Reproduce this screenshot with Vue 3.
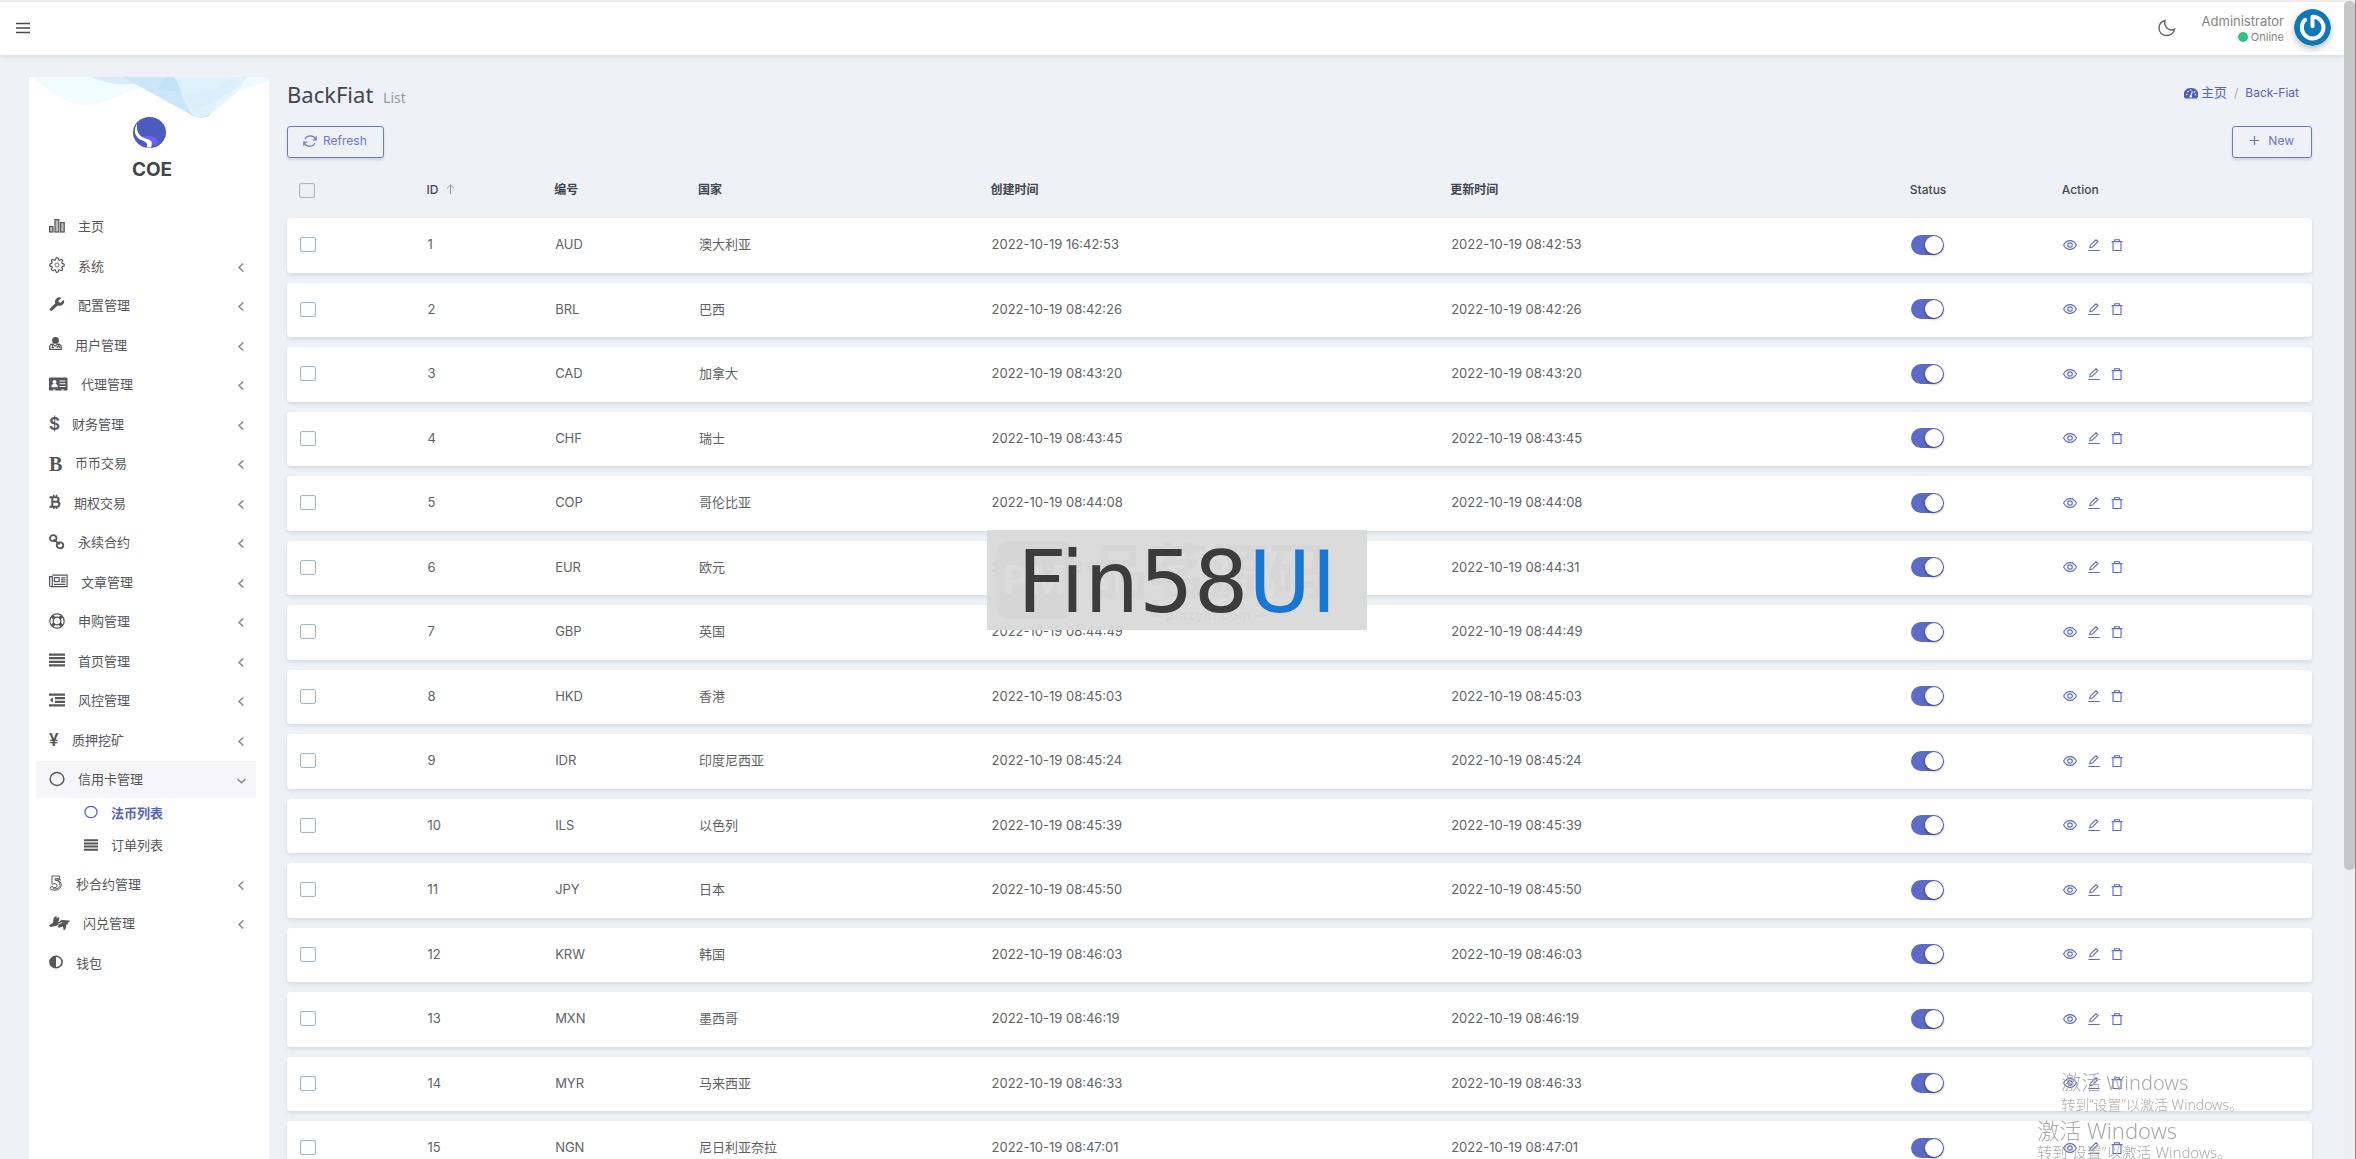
<script setup>
import { reactive, ref } from "vue";

const gear =
  '<g transform="scale(.6667)"><circle cx="12" cy="12" r="3"/><path d="M19.4 15a1.65 1.65 0 0 0 .33 1.82l.06.06a2 2 0 0 1 0 2.83 2 2 0 0 1-2.83 0l-.06-.06a1.65 1.65 0 0 0-1.82-.33 1.65 1.65 0 0 0-1 1.51V21a2 2 0 0 1-2 2 2 2 0 0 1-2-2v-.09A1.65 1.65 0 0 0 9 19.4a1.65 1.65 0 0 0-1.82.33l-.06.06a2 2 0 0 1-2.83 0 2 2 0 0 1 0-2.83l.06-.06a1.65 1.65 0 0 0 .33-1.82 1.65 1.65 0 0 0-1.51-1H3a2 2 0 0 1-2-2 2 2 0 0 1 2-2h.09A1.65 1.65 0 0 0 4.6 9a1.65 1.65 0 0 0-.33-1.82l-.06-.06a2 2 0 0 1 0-2.83 2 2 0 0 1 2.83 0l.06.06a1.65 1.65 0 0 0 1.82.33H9a1.65 1.65 0 0 0 1-1.51V3a2 2 0 0 1 2-2 2 2 0 0 1 2 2v.09a1.65 1.65 0 0 0 1 1.51 1.65 1.65 0 0 0 1.82-.33l.06-.06a2 2 0 0 1 2.83 0 2 2 0 0 1 0 2.83l-.06.06a1.65 1.65 0 0 0-.33 1.82V9a1.65 1.65 0 0 0 1.51 1H21a2 2 0 0 1 2 2 2 2 0 0 1-2 2h-.09a1.65 1.65 0 0 0-1.51 1z" stroke-width="1.8"/></g>';

// w = drawn width, every icon is 16 high
const icons = {
  chart: {
    w: 16,
    body: '<g fill="#bbb"><rect x=".6" y="8.6" width="3.4" height="5.4"/><rect x="6" y="1.6" width="3.8" height="12.4"/><rect x="11.6" y="4.6" width="3.6" height="9.4"/></g>',
  },
  gear: { w: 16, body: gear },
  wrench: {
    w: 16,
    body: '<path transform="translate(-1.6 -1) scale(.76 .7)" fill="currentColor" stroke="none" d="M14.7 6.3a1 1 0 0 0 0 1.4l1.6 1.6a1 1 0 0 0 1.4 0l3.77-3.77a6 6 0 0 1-7.94 7.94l-6.91 6.91a2.12 2.12 0 0 1-3-3l6.91-6.91a6 6 0 0 1 7.94-7.94l-3.76 3.76z"/>',
  },
  doctor: {
    w: 13,
    body: '<circle cx="6.5" cy="4.4" r="3.4" fill="currentColor" stroke="none"/><path d="M.7 13.4V11c0-1.9 1-2.9 3-2.9l2.5 2 2.6-2c2.2 0 3.5 1 3.5 2.9v2.4z"/><path d="M3.5 8.5v3M9.5 8.5v2M8.3 12v-1.2c0-1 2.5-1 2.5 0V12M2.5 11.5H5"/>',
  },
  card: {
    w: 19,
    body: '<rect x="0" y="1.5" width="18.5" height="13" rx="1.2" fill="currentColor" stroke="none"/><g fill="#fff" stroke="none"><circle cx="5.5" cy="6" r="2"/><path d="M2.3 11.3c0-3 1.2-3.4 3.2-3.4s3.3.4 3.3 3.4z"/><path d="M10.5 4.5h6v1.1h-6zM10.5 7.2h6v1.1h-6zM10.5 9.9h6V11h-6zM4 13.6h2.5v.9H4zM12.5 13.6H15v.9h-2.5z"/></g>',
  },
  dollar: { w: 10, glyph: "$" },
  bold: { w: 13, glyph: "B", serif: true },
  bitcoin: {
    w: 12,
    body: '<path stroke-width="2" d="M3.3 3.2h3.8c3.3 0 3.3 4.5 0 4.5H3.3zM3.3 7.7h4.5c3.4 0 3.4 5.1 0 5.1H3.3zM.5 3.2h3M.5 12.8h3"/><path stroke-width="1.5" d="M4.8.8v2M7.5.8v2M4.8 13v2M7.5 13v2"/>',
  },
  link: {
    w: 16,
    body: '<g stroke-width="1.8"><ellipse cx="4.2" cy="4.2" rx="3.3" ry="3"/><ellipse cx="11" cy="11.3" rx="3.3" ry="3"/><path d="M4.6 5.4l6 5"/></g>',
  },
  news: {
    w: 19,
    body: '<path d="M3.3 2.1h14.8v11.6H2.2C1.2 13.7.6 13 .6 12.2V3.6h2.7v8.6c0 1-.6 1.5-1.2 1.5"/><rect x="5.4" y="4.7" width="4.8" height="3.9"/><path d="M12 4.9h4.4M12 6.9h4.4M12 8.9h4.4M5 11.3h11.4"/>',
  },
  ring: {
    w: 16,
    body: '<circle cx="8" cy="8" r="7.2"/><circle cx="8" cy="8" r="3.8"/><g stroke-width="3.4"><path d="M3.1 3.1l2.5 2.5M12.9 3.1l-2.5 2.5M3.1 12.9l2.5-2.5M12.9 12.9l-2.5-2.5"/></g>',
  },
  justify: {
    w: 16,
    body: '<path stroke-width="2.2" d="M0 2.6h16M0 6.2h16M0 9.8h16M0 13.4h16"/>',
  },
  outdent: {
    w: 16,
    body: '<path stroke-width="2.2" d="M0 2.6h16M6 6.2h10M6 9.8h10M0 13.4h16"/><path d="M3.9 5.3v5.5L.8 8z" fill="currentColor" stroke="none"/>',
  },
  yen: { w: 10, glyph: "¥" },
  circle: { w: 16, body: '<ellipse cx="8" cy="8" rx="6.9" ry="6.5" stroke-width="1.4"/>' },
  five: {
    w: 14,
    body: '<path stroke-width="1" d="M3 1h7.5v2.7H6v1.5c8-1 8.5 9.8 0 10-2.3 0-4-.6-5-1.7l1.6-2.1c3.6 2.7 6.2.7 5.2-1.6-.8-1.5-2.7-1.400-4.3-.6H3zM8 3.7l4 1.5M7 5.2c3 1 4 2 3.8 5M4 13.5c4 1 6.5-.5 7-3"/>',
  },
  sign: {
    w: 21,
    body: '<path fill="currentColor" stroke="none" d="M0 10.5L4 7.5 4.6 3 7.200.8l.8 2.800L9.600 2l.9 1.200-1.300 4.200 3.300-2.500 8.100.5-.2 1.700-1.800.6.5 1.600-1.700.3-.8 4.300-1.800 1.500-1-3.800-3.800 1.200-1.700-1.300 2.500-2.300L6.500 11l-5 .9z"/><path stroke="#fff" stroke-width=".8" d="M9.200 9l4.200-1.500"/>',
  },
  half: {
    w: 14,
    body: '<ellipse cx="7" cy="8" rx="6.1" ry="5.7" stroke-width="1.6"/><path d="M7 2.5A5.7 5.5 0 0 0 7 13.5z" fill="currentColor" stroke="none"/>',
  },
};

const menus = reactive([
  { icon: "chart", title: "主页" },
  { icon: "gear", title: "系统", arrow: true },
  { icon: "wrench", title: "配置管理", arrow: true },
  { icon: "doctor", title: "用户管理", arrow: true },
  { icon: "card", title: "代理管理", arrow: true },
  { icon: "dollar", title: "财务管理", arrow: true },
  { icon: "bold", title: "币币交易", arrow: true },
  { icon: "bitcoin", title: "期权交易", arrow: true },
  { icon: "link", title: "永续合约", arrow: true },
  { icon: "news", title: "文章管理", arrow: true },
  { icon: "ring", title: "申购管理", arrow: true },
  { icon: "justify", title: "首页管理", arrow: true },
  { icon: "outdent", title: "风控管理", arrow: true },
  { icon: "yen", title: "质押挖矿", arrow: true },
  {
    icon: "circle",
    title: "信用卡管理",
    arrow: true,
    open: true,
    children: [
      { icon: "circle", title: "法币列表", active: true },
      { icon: "justify", title: "订单列表" },
    ],
  },
  { icon: "five", title: "秒合约管理", arrow: true },
  { icon: "sign", title: "闪兑管理", arrow: true },
  { icon: "half", title: "钱包" },
]);

const checkAll = ref(false);
const rows = reactive(
  [
    ["AUD", "澳大利亚", "16:42:53", "08:42:53"],
    ["BRL", "巴西", "08:42:26"],
    ["CAD", "加拿大", "08:43:20"],
    ["CHF", "瑞士", "08:43:45"],
    ["COP", "哥伦比亚", "08:44:08"],
    ["EUR", "欧元", "08:44:31"],
    ["GBP", "英国", "08:44:49"],
    ["HKD", "香港", "08:45:03"],
    ["IDR", "印度尼西亚", "08:45:24"],
    ["ILS", "以色列", "08:45:39"],
    ["JPY", "日本", "08:45:50"],
    ["KRW", "韩国", "08:46:03"],
    ["MXN", "墨西哥", "08:46:19"],
    ["MYR", "马来西亚", "08:46:33"],
    ["NGN", "尼日利亚奈拉", "08:47:01"],
  ].map(([code, country, created, updated], i) => ({
    id: i + 1,
    code,
    country,
    created: "2022-10-19 " + created,
    updated: "2022-10-19 " + (updated || created),
    status: true,
    checked: false,
  }))
);

const toggleAll = () => {
  rows.forEach((row) => (row.checked = checkAll.value));
};
</script>

<template>
  <div class="shell">
    <div class="page">
      <header class="topbar">
        <button class="icon-btn" aria-label="Toggle menu">
          <svg width="14" height="12" viewBox="0 0 14 12"><path d="M0 1.5h14M0 6h14M0 10.5h14" stroke="#4a4a4d" stroke-width="1.7" /></svg>
        </button>
        <div class="topbar-right">
          <button class="icon-btn" aria-label="Dark mode">
            <svg width="18" height="18" viewBox="0 0 18 18" fill="none" stroke="#666" stroke-width="1.4">
              <path d="M7 1.5C3.5 2.5 1 5.500 1 9c0 4.4 3.4 7.5 7.7 7.5 4 0 7.3-2.5 7.9-6.3-1 .5-1.9.8-3 .8-4.3 0-8-4.5-6.6-9.5z" />
            </svg>
          </button>
          <div class="user">
            <span class="user-name">Administrator</span>
            <span class="user-state"><i class="dot"></i>Online</span>
          </div>
          <svg class="avatar" width="37" height="37" viewBox="0 0 37 37">
            <circle cx="18.5" cy="18.5" r="18.5" fill="#0f77b8" />
            <path d="M11.2 10.8a10.8 10.8 0 1 0 7.3-3v9.5" fill="none" stroke="#fff" stroke-width="4" stroke-linecap="round" stroke-linejoin="round" />
          </svg>
        </div>
      </header>

      <div class="body">
        <aside class="sidebar">
          <div class="brand">
            <svg class="wave" viewBox="0 0 240 42" preserveAspectRatio="none" aria-hidden="true">
              <path d="M2 0C28 18 38 30 60 28S100 12 115 10L96 0z" fill="#e9fafa" opacity=".6" />
              <path d="M24 0c14 12 34 28 54 22L120 6 96 0z" fill="#effbfc" opacity=".8" />
              <path d="M62 0c12 6 30 9 46 6L128 0z" fill="#d6ecfa" />
              <path d="M94 0c24 14 48 26 70 39 4 3 12 2 16 0L206 0z" fill="#cbe6f9" />
              <path d="M128 12c22 5 46 0 62-12h-52z" fill="#b4dbf6" opacity=".4" />
              <path d="M145 0c8 10 8 26 20 39 14 8 38-23 62-39z" fill="#e3f3fd" opacity=".85" />
              <path d="M155 18c24-2 36-6 50-18h22c-26 14-42 26-62 33z" fill="#d3ebfb" opacity=".5" />
              <path d="M208 14l32-10V0h-22z" fill="#eef9fd" />
            </svg>
            <svg class="logo" width="33" height="31" viewBox="0 0 33 31" aria-hidden="true">
              <ellipse cx="16.5" cy="15.5" rx="16.5" ry="15.5" fill="#4b5bbe" />
              <path d="M5 17c2 3 6 2 12 2 5 0 8 3 8 5s-2 4-4 5l-5-3c0-4-8-3-11-9z" fill="#6a62e8" />
              <path d="M4 6.500C0 14 2 19.500 7 22.500c5 2.500 8.500 2.500 6.500 8h4.500c2-5 .5-7.500-4-8.500C7 20 3 16 4 6.500z" fill="#fff" />
            </svg>
            <strong>COE</strong>
          </div>
          <nav>
            <ul class="menu">
              <li v-for="item in menus" :key="item.title">
                <a href="#" class="menu-link" :class="{ open: item.open }" @click.prevent="item.children && (item.open = !item.open)">
                  <span v-if="icons[item.icon].glyph" class="glyph" :class="{ serif: icons[item.icon].serif }" :style="{ width: icons[item.icon].w + 'px' }">{{ icons[item.icon].glyph }}</span>
                  <svg v-else class="menu-icon" :width="icons[item.icon].w" height="16" :viewBox="`0 0 ${icons[item.icon].w} 16`" v-html="icons[item.icon].body"></svg>
                  <span>{{ item.title }}</span>
                  <svg v-if="item.arrow && !item.open" class="arrow" width="9" height="9" viewBox="-1 0 9 9"><path d="M5.3.5L1 4.5l4.3 4" /></svg>
                  <svg v-else-if="item.arrow" class="arrow" width="9" height="6" viewBox="0 0 9 6"><path d="M.5 1l4 3.8L8.5 1" /></svg>
                </a>
                <ul v-if="item.open" class="submenu">
                  <li v-for="sub in item.children" :key="sub.title">
                    <a href="#" class="sub-link" :class="{ active: sub.active }">
                      <svg class="menu-icon" width="14" height="14" viewBox="0 0 16 16" v-html="icons[sub.icon].body"></svg>
                      <span>{{ sub.title }}</span>
                    </a>
                  </li>
                </ul>
              </li>
            </ul>
          </nav>
        </aside>

        <main class="content">
          <div class="title-row">
            <h1>BackFiat <small>List</small></h1>
            <div class="crumbs">
              <a href="#">
                <svg width="14" height="12" viewBox="0 0 14 12">
                  <path d="M7 1a7 6.5 0 0 0-5.9 10.5h11.8A7 6.5 0 0 0 7 1z" fill="#4b5bbe" />
                  <path d="M6.600 9.500L8.400 4.500" stroke="#fff" stroke-width="1.1" />
                  <g fill="#fff"><circle cx="2.7" cy="7.5" r=".8" /><circle cx="4" cy="4.6" r=".8" /><circle cx="6.7" cy="3" r=".8" /><circle cx="10.5" cy="4.9" r=".8" /><circle cx="11.5" cy="7.6" r=".8" /><circle cx="6.7" cy="9.5" r="1.2" /></g>
                </svg>
                主页
              </a>
              <span class="slash">/</span>
              <a href="#">Back-Fiat</a>
            </div>
          </div>

          <div class="tools">
            <button class="btn">
              <svg width="14" height="12" viewBox="0 0 14 12" fill="none" stroke="currentColor" stroke-width="1.2">
                <path d="M12.8 4.6C11.8 2.2 9.6.8 7.2.8 5 .8 3 2 2 4M1.2 7.4c1 2.4 3.2 3.8 5.6 3.8 2.2 0 4.2-1.2 5.200-3.200" />
                <path d="M13.2 1.2v3.6H9.8M.8 10.8V7.2h3.4" />
              </svg>
              Refresh
            </button>
            <button class="btn btn-new">
              <svg width="9" height="9" viewBox="0 0 9 9" stroke="currentColor" stroke-width="1.2"><path d="M4.5 0v9M0 4.5h9" /></svg>
              New
            </button>
          </div>

          <table>
            <colgroup>
              <col style="width: 6.3%" />
              <col style="width: 6.3%" />
              <col style="width: 7.1%" />
              <col style="width: 14.45%" />
              <col style="width: 22.7%" />
              <col style="width: 22.7%" />
              <col style="width: 7.5%" />
              <col />
            </colgroup>
            <thead>
              <tr>
                <th><input v-model="checkAll" type="checkbox" class="check" aria-label="Select all" @change="toggleAll" /></th>
                <th>
                  ID
                  <svg class="sort" width="9" height="10" viewBox="0 0 9 10"><path d="M4.5 10V1M.8 4.5L4.5.9l3.7 3.6" /></svg>
                </th>
                <th class="strong">编号</th>
                <th class="strong">国家</th>
                <th class="strong">创建时间</th>
                <th class="strong">更新时间</th>
                <th>Status</th>
                <th>Action</th>
              </tr>
            </thead>
            <tbody>
              <tr v-for="row in rows" :key="row.id">
                <td><input v-model="row.checked" type="checkbox" class="check" :aria-label="'Select ' + row.code" /></td>
                <td>{{ row.id }}</td>
                <td>{{ row.code }}</td>
                <td>{{ row.country }}</td>
                <td>{{ row.created }}</td>
                <td>{{ row.updated }}</td>
                <td><input v-model="row.status" type="checkbox" class="switch" :aria-label="'Status ' + row.code" /></td>
                <td>
                  <div class="actions">
                    <a href="#" aria-label="View">
                      <svg width="14" height="12" viewBox="0 0 14 12"><path d="M.6 6C2 3.2 4.3 1.6 7 1.6S12 3.2 13.4 6C12 8.8 9.7 10.4 7 10.4S2 8.8.6 6z" /><ellipse cx="7" cy="6" rx="2.3" ry="2.1" /></svg>
                    </a>
                    <a href="#" aria-label="Edit">
                      <svg width="12" height="12" viewBox="0 0 12 12"><path d="M1.8 8.8l.5-2.6L8 .8l2 1.7-5.600 5.600zM.3 11.5h11.4" /></svg>
                    </a>
                    <a href="#" aria-label="Delete">
                      <svg width="12" height="12" viewBox="0 0 12 12"><path d="M.5 2.6h11M3.6 2.6V.7h4.8v1.9M2 2.6v8.9h8V2.6" /></svg>
                    </a>
                  </div>
                </td>
              </tr>
            </tbody>
          </table>
        </main>
      </div>
    </div>

    <div class="scrollbar" aria-hidden="true"><div class="thumb"></div></div>

    <div class="stamp">
      <div class="ghost" aria-hidden="true">
        <span class="ghost-mark">PM</span>
        <span class="ghost-name">品茗源码<small>— pmzym.com —</small></span>
      </div>
      <span class="stamp-text">Fin58<b>UI</b></span>
    </div>
    <div class="activate first">
      <p>激活 Windows</p>
      <span>转到“设置”以激活 Windows。</span>
    </div>
    <div class="activate second">
      <p>激活 Windows</p>
      <span>转到“设置”以激活 Windows。</span>
    </div>
  </div>
</template>

<style>
body {
  background: #eef1f6;
  overflow: hidden;
}
</style>

<style scoped>
* {
  box-sizing: border-box;
}

.shell {
  display: flex;
  height: 100vh;
  overflow: hidden;
  font: 13px/1.5 Inter, "Noto Sans CJK SC", sans-serif;
  color: #606266;
  background: #eef1f6;
}

.page {
  display: flex;
  flex: 1;
  flex-direction: column;
  min-width: 0;
}

a {
  color: #5464c4;
  text-decoration: none;
}

ul {
  margin: 0;
  padding: 0;
  list-style: none;
}

button {
  font: inherit;
  cursor: pointer;
}

/* top bar */
.topbar {
  display: flex;
  flex: none;
  align-items: center;
  justify-content: space-between;
  height: 55px;
  padding: 0 13px 2px 16px;
  background: #fff;
  border-top: 2px solid #ececec;
  box-shadow: 0 2px 4px rgba(0, 0, 0, 0.08);
}

.icon-btn {
  display: flex;
  padding: 0;
  background: none;
  border: 0;
}

.topbar-right {
  display: flex;
  align-items: center;
  gap: 10px;
}

.topbar-right .icon-btn {
  margin-right: 16px;
}

.user {
  display: flex;
  flex-direction: column;
  align-items: flex-end;
  padding-top: 3px;
  line-height: 16px;
  color: #858585;
}

.user-state {
  display: flex;
  align-items: center;
  gap: 3px;
  font-size: 11px;
}

.dot {
  width: 10px;
  height: 10px;
  border-radius: 50%;
  background: #2fbf87;
}

.avatar {
  border-radius: 50%;
  box-shadow: 0 3px 6px rgba(0, 0, 0, 0.25);
}

.body {
  display: flex;
  flex: 1;
  gap: 18px;
  min-height: 0;
  padding: 22px 32px 0 29px;
}

/* sidebar */
.sidebar {
  flex: none;
  width: 240px;
  background: #fff;
}

.brand {
  display: flex;
  position: relative;
  flex-direction: column;
  align-items: center;
  padding-top: 40px;
  margin-bottom: 26px;
}

.wave {
  position: absolute;
  top: 0;
  left: 0;
  width: 100%;
  height: 42px;
}

.logo {
  position: relative;
}

.brand strong {
  margin-top: 10px;
  padding-left: 6px;
  font-size: 19px;
  line-height: 24px;
  color: #414750;
}

.menu {
  padding: 0 13px 0 7px;
}

.menu > li {
  margin-bottom: 3px;
}

.menu-link {
  display: flex;
  align-items: center;
  gap: 13px;
  padding: 9px 10px 8px 13px;
  color: #55565a;
}

.menu-link.open {
  background: #f6f6f9;
}

.menu-icon {
  flex: none;
  margin: -1px 0 1px;
  fill: none;
  stroke: currentColor;
  stroke-width: 1.2px;
}

.glyph {
  font: 600 17px/16px Inter, sans-serif;
}

.glyph.serif {
  font: bold 20px/16px "Liberation Serif", serif;
}

.arrow {
  margin: 2px 0 0 auto;
  fill: none;
  stroke: #888;
  stroke-width: 1.5px;
}

.submenu {
  padding-left: 48px;
}

.sub-link {
  display: flex;
  align-items: center;
  gap: 13px;
  padding: 6px 0 7px;
  color: #55565a;
}

.sub-link.active {
  font-weight: 600;
  color: #5464c4;
}

/* content */
.content {
  flex: 1;
  min-width: 0;
}

.title-row {
  display: flex;
  align-items: center;
  justify-content: space-between;
  height: 36px;
}

h1 {
  margin: 0;
  padding-top: 2px;
  font: 400 22px/30px "Noto Sans", sans-serif;
  color: #414750;
}

h1 small {
  margin-left: 4px;
  font-size: 14px;
  color: #999;
}

.crumbs {
  display: flex;
  align-items: center;
  gap: 7px;
  padding: 0 13px 4px 0;
  font-size: 12px;
}

.crumbs a:first-child {
  display: flex;
  align-items: center;
  gap: 3px;
  font-size: 13px;
}

.slash {
  color: #aaa;
}

.tools {
  display: flex;
  justify-content: space-between;
  margin-top: 13px;
}

.btn {
  display: flex;
  align-items: center;
  gap: 6px;
  height: 32px;
  padding: 0 16px 3px 15px;
  font-size: 12px;
  color: #6a78cc;
  background: transparent;
  border: 1px solid #6a78cc;
  border-radius: 3px;
  box-shadow: 0 2px 3px rgba(0, 0, 0, 0.12);
}

.btn-new {
  gap: 9px;
  padding: 0 17px 3px;
}

table {
  width: 100%;
  table-layout: fixed;
  border-collapse: separate;
  border-spacing: 0 10px;
}

th {
  padding: 13px 0 9px 12px;
  font-size: 12px;
  font-weight: 500;
  text-align: left;
  color: #414750;
}

th.strong {
  font-weight: 700;
}

td {
  padding: 17px 0 18px 13px;
  background: #fff;
}

tbody tr {
  border-radius: 4px;
  box-shadow: 0 2px 4px rgba(0, 0, 0, 0.1);
}

td:first-child {
  border-radius: 4px 0 0 4px;
}

td:last-child {
  border-radius: 0 4px 4px 0;
}

.sort {
  margin-left: 4px;
  fill: none;
  stroke: #999;
}

.check {
  display: block;
  appearance: none;
  width: 16px;
  height: 15px;
  margin: 0;
  background: transparent;
  border: 1px solid #a9b7c3;
  border-radius: 2px;
  box-shadow: inset 0 0 1px #a9b7c3;
}

.check:checked {
  background: #5c6bc6;
}

.switch {
  display: flex;
  appearance: none;
  width: 33px;
  height: 20px;
  margin: -1px 0;
  background: #ccc;
  border-radius: 10px;
}

.switch::before {
  content: "";
  width: 18px;
  height: 18px;
  margin: 1px;
  background: #fff;
  border-radius: 50%;
  box-shadow: 0 1px 3px rgba(0, 0, 0, 0.5);
}

.switch:checked {
  justify-content: flex-end;
  background: #5c6bc6;
}

.actions {
  display: flex;
  align-items: center;
  gap: 11px;
}

.actions a {
  display: flex;
}

.actions svg {
  fill: none;
  stroke: #5c6bc6;
  stroke-width: 1.1px;
}

/* scrollbar */
.scrollbar {
  flex: none;
  width: 12px;
  padding-top: 1px;
  background: #eee;
  border-right: 1px solid #888;
}

.thumb {
  height: 75%;
  background: #c6c6c6;
  border-radius: 5px;
}

/* overlays */
.stamp {
  display: flex;
  position: fixed;
  top: 50%;
  left: 50%;
  align-items: center;
  justify-content: center;
  width: 380px;
  height: 100px;
  margin: -50px 0 0 -191px;
  background: rgba(217, 217, 217, 0.95);
}

.stamp-text {
  position: relative;
  padding-top: 4px;
  font: 86px/100px "DejaVu Sans", sans-serif;
  color: #3c3c3c;
}

.stamp-text b {
  font-weight: 400;
  color: #1976d2;
}

.ghost {
  display: flex;
  position: absolute;
  inset: 0;
  align-items: center;
  gap: 14px;
  padding-left: 8px;
  color: #d6d6d6;
}

.ghost-mark {
  padding: 0 8px;
  font: bold 40px/78px Inter, sans-serif;
  color: #dbdbdb;
  background: #d6d6d6;
  border-radius: 14px;
}

.ghost-name {
  font-size: 60px;
  font-weight: 700;
  line-height: 70px;
  white-space: nowrap;
}

.ghost-name small {
  display: block;
  font-size: 14px;
  line-height: 16px;
  text-align: center;
}

.activate {
  position: fixed;
  font-family: "Noto Sans", "Noto Sans CJK SC", sans-serif;
  font-size: 14px;
  line-height: 20px;
  font-weight: 300;
  color: #aaa;
  pointer-events: none;
}

.activate p {
  margin: 0;
  font-size: 20px;
  line-height: 24px;
}

.activate.first {
  right: 113px;
  bottom: 44px;
}

.activate.second {
  right: 124px;
  bottom: -4px;
}

.activate.second p {
  font-size: 22px;
}

.activate.second span {
  font-size: 15px;
}
</style>
